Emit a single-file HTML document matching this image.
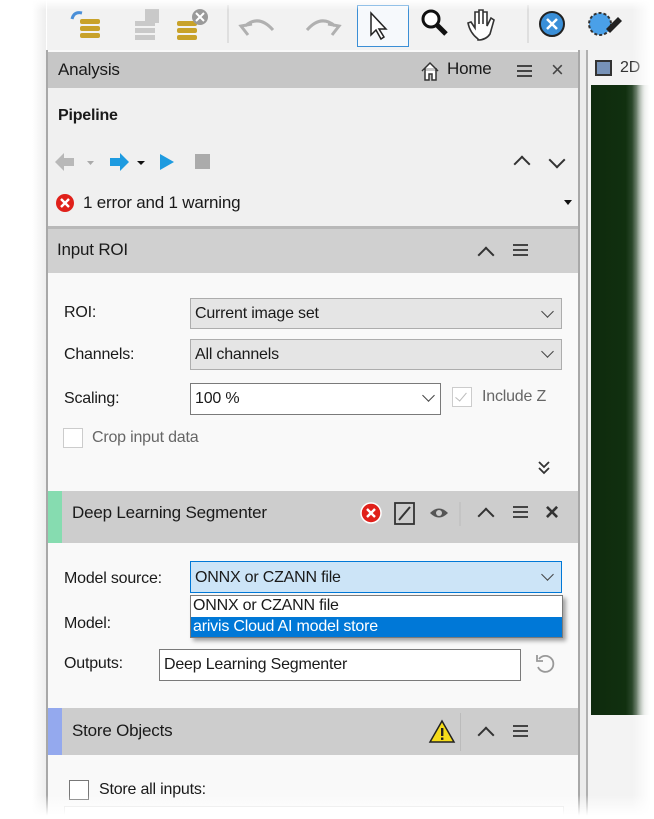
<!DOCTYPE html>
<html><head><meta charset="utf-8"><style>
*{margin:0;padding:0;box-sizing:border-box}
body{width:654px;height:819px;position:relative;overflow:hidden;background:#fff;font-family:"Liberation Sans",sans-serif;color:#1a1a1a}
.a{position:absolute}
.t{position:absolute;font-size:16px;white-space:nowrap;letter-spacing:-0.2px}
.hdr{position:absolute;left:48px;width:530px;background:#cbcbcb}
.dd{position:absolute;border:1px solid #adadad;background:#e5e5e5}
.chev{position:absolute;width:9px;height:9px;border-right:1.5px solid #444;border-bottom:1.5px solid #444;transform:rotate(45deg)}
.up{position:absolute;width:12px;height:12px;border-left:2.5px solid #333;border-top:2.5px solid #333;transform:rotate(45deg)}
.ham{position:absolute;width:15px;height:12px;border-top:2.5px solid #444;border-bottom:2.5px solid #444}
.ham:after{content:"";position:absolute;left:0;right:0;top:2.5px;border-top:2.5px solid #444}
.cb{position:absolute;width:20px;height:20px;border:1.5px solid #777;background:#fff}
</style></head><body>
<!-- toolbar -->
<div class="a" style="left:47px;top:0;width:607px;height:50px;background:#f2f2f2"></div>
<div class="a" style="left:357px;top:5px;width:52px;height:42px;border:1.5px solid #3b8fd6;background:#f6f9fc"></div>
<svg class="a" style="left:60px;top:5px" width="594" height="40">
 <g fill="#c8a22a"><rect x="20" y="14" width="20" height="5" rx="2"/><rect x="20" y="21" width="20" height="5" rx="2"/><rect x="20" y="28" width="20" height="5" rx="2"/></g>
 <path d="M12 14 q2 -8 10 -6" stroke="#4a8fd8" stroke-width="3" fill="none"/>
 <g fill="#c9c9c9"><rect x="75" y="16" width="20" height="5"/><rect x="75" y="23" width="20" height="5"/><rect x="75" y="30" width="20" height="5"/><rect x="85" y="4" width="14" height="14"/></g>
 <g fill="#c8a22a"><rect x="117" y="16" width="20" height="5" rx="2"/><rect x="117" y="23" width="20" height="5" rx="2"/><rect x="117" y="30" width="20" height="5" rx="2"/></g>
 <circle cx="140" cy="12" r="8" fill="#9a9a9a"/><path d="M136 8l8 8M144 8l-8 8" stroke="#fff" stroke-width="2"/>
 <line x1="168" y1="0" x2="168" y2="38" stroke="#ccc"/>
 <path d="M188 30 l-7 -9 l11 -2 M185 21 q14 -12 28 4" stroke="#b0b0b0" stroke-width="3" fill="none"/>
 <path d="M272 30 l7 -9 l-11 -2 M275 21 q-14 -12 -28 4" stroke="#b0b0b0" stroke-width="3" fill="none"/>
 <path d="M311 8 v22 l5 -5 l5 9 l3 -2 l-5 -8 h7 z" fill="#fff" stroke="#222" stroke-width="1.5"/>
 <circle cx="371" cy="14" r="8" fill="#fff" stroke="#111" stroke-width="3"/><path d="M377 20 l9 9" stroke="#111" stroke-width="5"/>
 <path d="M418 34 q-8 -6 -10 -16 l3 -1 l4 6 v-16 h4 v12 v-14 h4 v14 v-12 h4 v14 l4 -8 l3 2 l-4 14 q-4 6 -12 6z" fill="#fff" stroke="#333" stroke-width="1.6"/>
 <line x1="468" y1="0" x2="468" y2="38" stroke="#ccc"/>
 <circle cx="492" cy="19" r="12" fill="#3a8fd8" stroke="#222" stroke-width="2"/><path d="M487 14l10 10M497 14l-10 10" stroke="#fff" stroke-width="2.5"/>
 <circle cx="540" cy="19" r="11" fill="#4aa0e8" stroke="#333" stroke-width="2" stroke-dasharray="3 2"/>
 <path d="M546 24 l12 -12 l4 4 l-12 12z" fill="#222"/>
</svg>
<!-- panel -->
<div class="a" style="left:46px;top:50px;width:2px;height:769px;background:#a8a8a8"></div>
<div class="a" style="left:48px;top:50px;width:530px;height:769px;background:#f9f9f9"></div>
<div class="a" style="left:578px;top:50px;width:2px;height:769px;background:#a8a8a8"></div>
<div class="a" style="left:580px;top:50px;width:8px;height:769px;background:#ececec"></div>
<div class="a" style="left:586px;top:50px;width:2px;height:769px;background:#b0b0b0"></div>
<!-- right view -->
<div class="a" style="left:588px;top:50px;width:66px;height:769px;background:#f3f3f3"></div>
<div class="a" style="left:595px;top:60px;width:17px;height:16px;border:2px solid #333;background:#7792b8"></div>
<div class="t" style="left:620px;top:59px;color:#333">2D</div>
<div class="a" style="left:591px;top:85px;width:63px;height:630px;background:linear-gradient(90deg,#0e2a0e,#11300f 55%,#3c563c 72%,#c8d0c8 85%,#fff)"></div>
<!-- analysis header -->
<div class="hdr" style="top:52px;height:36px;background:#c6c6c6"></div>
<div class="t" style="left:58px;top:60px;font-size:17px">Analysis</div>
<svg class="a" style="left:420px;top:60px" width="20" height="22"><path d="M2 11 L10 3 L18 11 M5 8 V20 H9 V14 H12 V20 H16 V8" fill="#fff" stroke="#333" stroke-width="1.5"/></svg>
<div class="t" style="left:447px;top:59px;font-size:17px">Home</div>
<div class="ham" style="left:517px;top:65px"></div>
<div class="t" style="left:551px;top:57px;font-size:22px;color:#444">×</div>
<!-- pipeline -->
<div class="a" style="left:48px;top:88px;width:530px;height:138px;background:#f0f0f0"></div>
<div class="t" style="left:58px;top:107px;font-weight:bold;font-size:16px">Pipeline</div>
<svg class="a" style="left:52px;top:150px" width="170" height="24">
 <path d="M3 12 L12 3 V8 H22 V16 H12 V21Z" fill="#b8b8b8"/>
 <path d="M35 11 h7 l-3.5 4z" fill="#aaa"/>
 <path d="M77 12 L68 3 V8 H58 V16 H68 V21Z" fill="#1e9be0"/>
 <path d="M85 11 h8 l-4 4z" fill="#111"/>
 <path d="M108 4 V20 L122 12Z" fill="#1e9be0"/>
 <rect x="143" y="4" width="15" height="15" fill="#ababab"/>
</svg>
<div class="up" style="left:516px;top:158px"></div>
<div class="chev" style="left:551px;top:154px;width:12px;height:12px;border-width:2.5px;border-color:#333"></div>
<svg class="a" style="left:55px;top:193px" width="20" height="20"><circle cx="10" cy="10" r="9" fill="#e0201a"/><path d="M6 6l8 8M14 6l-8 8" stroke="#fff" stroke-width="2.4"/></svg>
<div class="t" style="left:83px;top:193px;font-size:17px">1 error and 1 warning</div>
<div class="a" style="left:564px;top:200px;border:4px solid transparent;border-top:5px solid #111"></div>
<div class="a" style="left:48px;top:226px;width:530px;height:3px;background:#b8b8b8"></div>
<!-- input roi -->
<div class="hdr" style="top:229px;height:44px;background:#d0d0d0"></div>
<div class="t" style="left:57px;top:240px;font-size:17px">Input ROI</div>
<div class="up" style="left:480px;top:249px"></div>
<div class="ham" style="left:513px;top:244px"></div>
<div class="t" style="left:64px;top:304px">ROI:</div>
<div class="dd" style="left:190px;top:298px;width:372px;height:31px"></div>
<div class="t" style="left:195px;top:305px">Current image set</div>
<div class="chev" style="left:543px;top:307px"></div>
<div class="t" style="left:64px;top:346px">Channels:</div>
<div class="dd" style="left:190px;top:339px;width:372px;height:31px"></div>
<div class="t" style="left:195px;top:346px">All channels</div>
<div class="chev" style="left:543px;top:347px"></div>
<div class="t" style="left:64px;top:390px">Scaling:</div>
<div class="dd" style="left:190px;top:383px;width:251px;height:32px;background:#fff;border-color:#7a7a7a"></div>
<div class="t" style="left:195px;top:390px">100 %</div>
<div class="chev" style="left:424px;top:391px"></div>
<div class="cb" style="left:452px;top:387px;border-color:#ccc"></div>
<div class="a" style="left:458px;top:390px;width:6px;height:11px;border-right:1.5px solid #bbb;border-bottom:1.5px solid #bbb;transform:rotate(40deg)"></div>
<div class="t" style="left:482px;top:388px;color:#666">Include Z</div>
<div class="cb" style="left:63px;top:428px;border-color:#ccc"></div>
<div class="t" style="left:92px;top:429px;color:#666">Crop input data</div>
<svg class="a" style="left:537px;top:460px" width="14" height="16"><path d="M2 2 L7 7 L12 2 M2 8 L7 13 L12 8" fill="none" stroke="#333" stroke-width="1.8"/></svg>
<!-- deep learning -->
<div class="hdr" style="top:491px;height:52px;background:#cdcdcd"></div>
<div class="a" style="left:48px;top:491px;width:14px;height:52px;background:#86dcb0"></div>
<div class="t" style="left:72px;top:503px;font-size:17px">Deep Learning Segmenter</div>
<svg class="a" style="left:360px;top:502px" width="200" height="26">
 <circle cx="11" cy="11" r="10" fill="#e0201a" stroke="#fff" stroke-width="1.5"/><path d="M7 7l8 8M15 7l-8 8" stroke="#fff" stroke-width="2.4"/>
 <rect x="35" y="1" width="19" height="21" fill="none" stroke="#333" stroke-width="1.8"/><path d="M39 18 L50 5" stroke="#333" stroke-width="2"/>
 <path d="M70 11 q9 -9 18 0 q-9 9 -18 0z" fill="#555"/><circle cx="79" cy="11" r="3" fill="#ccc"/>
 <line x1="100" y1="-2" x2="100" y2="24" stroke="#bbb"/>
</svg>
<div class="up" style="left:480px;top:510px"></div>
<div class="ham" style="left:513px;top:506px"></div>
<div class="t" style="left:545px;top:499px;font-size:24px;font-weight:bold;color:#333">×</div>
<div class="t" style="left:64px;top:570px">Model source:</div>
<div class="dd" style="left:190px;top:561px;width:372px;height:32px;background:#cce4f7;border-color:#0078d7"></div>
<div class="t" style="left:195px;top:569px">ONNX or CZANN file</div>
<div class="chev" style="left:543px;top:570px"></div>
<div class="t" style="left:64px;top:615px">Model:</div>
<div class="t" style="left:64px;top:655px">Outputs:</div>
<div class="a" style="left:159px;top:649px;width:362px;height:32px;border:1px solid #7a7a7a;background:#fff"></div>
<div class="t" style="left:164px;top:656px">Deep Learning Segmenter</div>
<svg class="a" style="left:534px;top:653px" width="22" height="22"><path d="M5 6 A8 8 0 1 1 4 14" fill="none" stroke="#999" stroke-width="1.8"/><path d="M3 2 V8 H9" fill="none" stroke="#999" stroke-width="1.8"/></svg>
<div class="a" style="left:190px;top:595px;width:373px;height:43px;border:1px solid #7a7a7a;background:#fff;box-shadow:3px 3px 4px rgba(0,0,0,.35)"></div>
<div class="t" style="left:193px;top:597px">ONNX or CZANN file</div>
<div class="a" style="left:191px;top:617px;width:371px;height:20px;background:#0078d7"></div>
<div class="t" style="left:193px;top:618px;color:#fff">arivis Cloud AI model store</div>
<!-- store objects -->
<div class="hdr" style="top:708px;height:47px;background:#cdcdcd"></div>
<div class="a" style="left:48px;top:708px;width:14px;height:47px;background:#94a9ee"></div>
<div class="t" style="left:72px;top:721px;font-size:17px">Store Objects</div>
<svg class="a" style="left:428px;top:719px" width="28" height="25"><path d="M14 2 L26 23 H2Z" fill="#f5dc1a" stroke="#222" stroke-width="1.5"/><rect x="13" y="9" width="2.4" height="8" fill="#222"/><rect x="13" y="18.5" width="2.4" height="2.4" fill="#222"/></svg>
<div class="a" style="left:460px;top:713px;width:1px;height:38px;background:#bbb"></div>
<div class="up" style="left:480px;top:729px"></div>
<div class="ham" style="left:513px;top:725px"></div>
<div class="cb" style="left:69px;top:780px"></div>
<div class="t" style="left:99px;top:781px">Store all inputs:</div>
<div class="a" style="left:64px;top:806px;width:500px;height:13px;border:1px solid #ddd;background:#fff"></div>
<!-- fades -->
<div class="a" style="left:0;top:0;width:46px;height:819px;background:linear-gradient(90deg,#fff 70%,#eee)"></div>
<div class="a" style="left:0;top:0;width:654px;height:10px;background:linear-gradient(#fff,rgba(255,255,255,0))"></div>
<div class="a" style="left:0;top:795px;width:654px;height:24px;background:linear-gradient(rgba(255,255,255,0),#fff 85%)"></div>
<div class="a" style="left:632px;top:0;width:22px;height:819px;background:linear-gradient(90deg,rgba(255,255,255,0),#fff 85%)"></div>
</body></html>
